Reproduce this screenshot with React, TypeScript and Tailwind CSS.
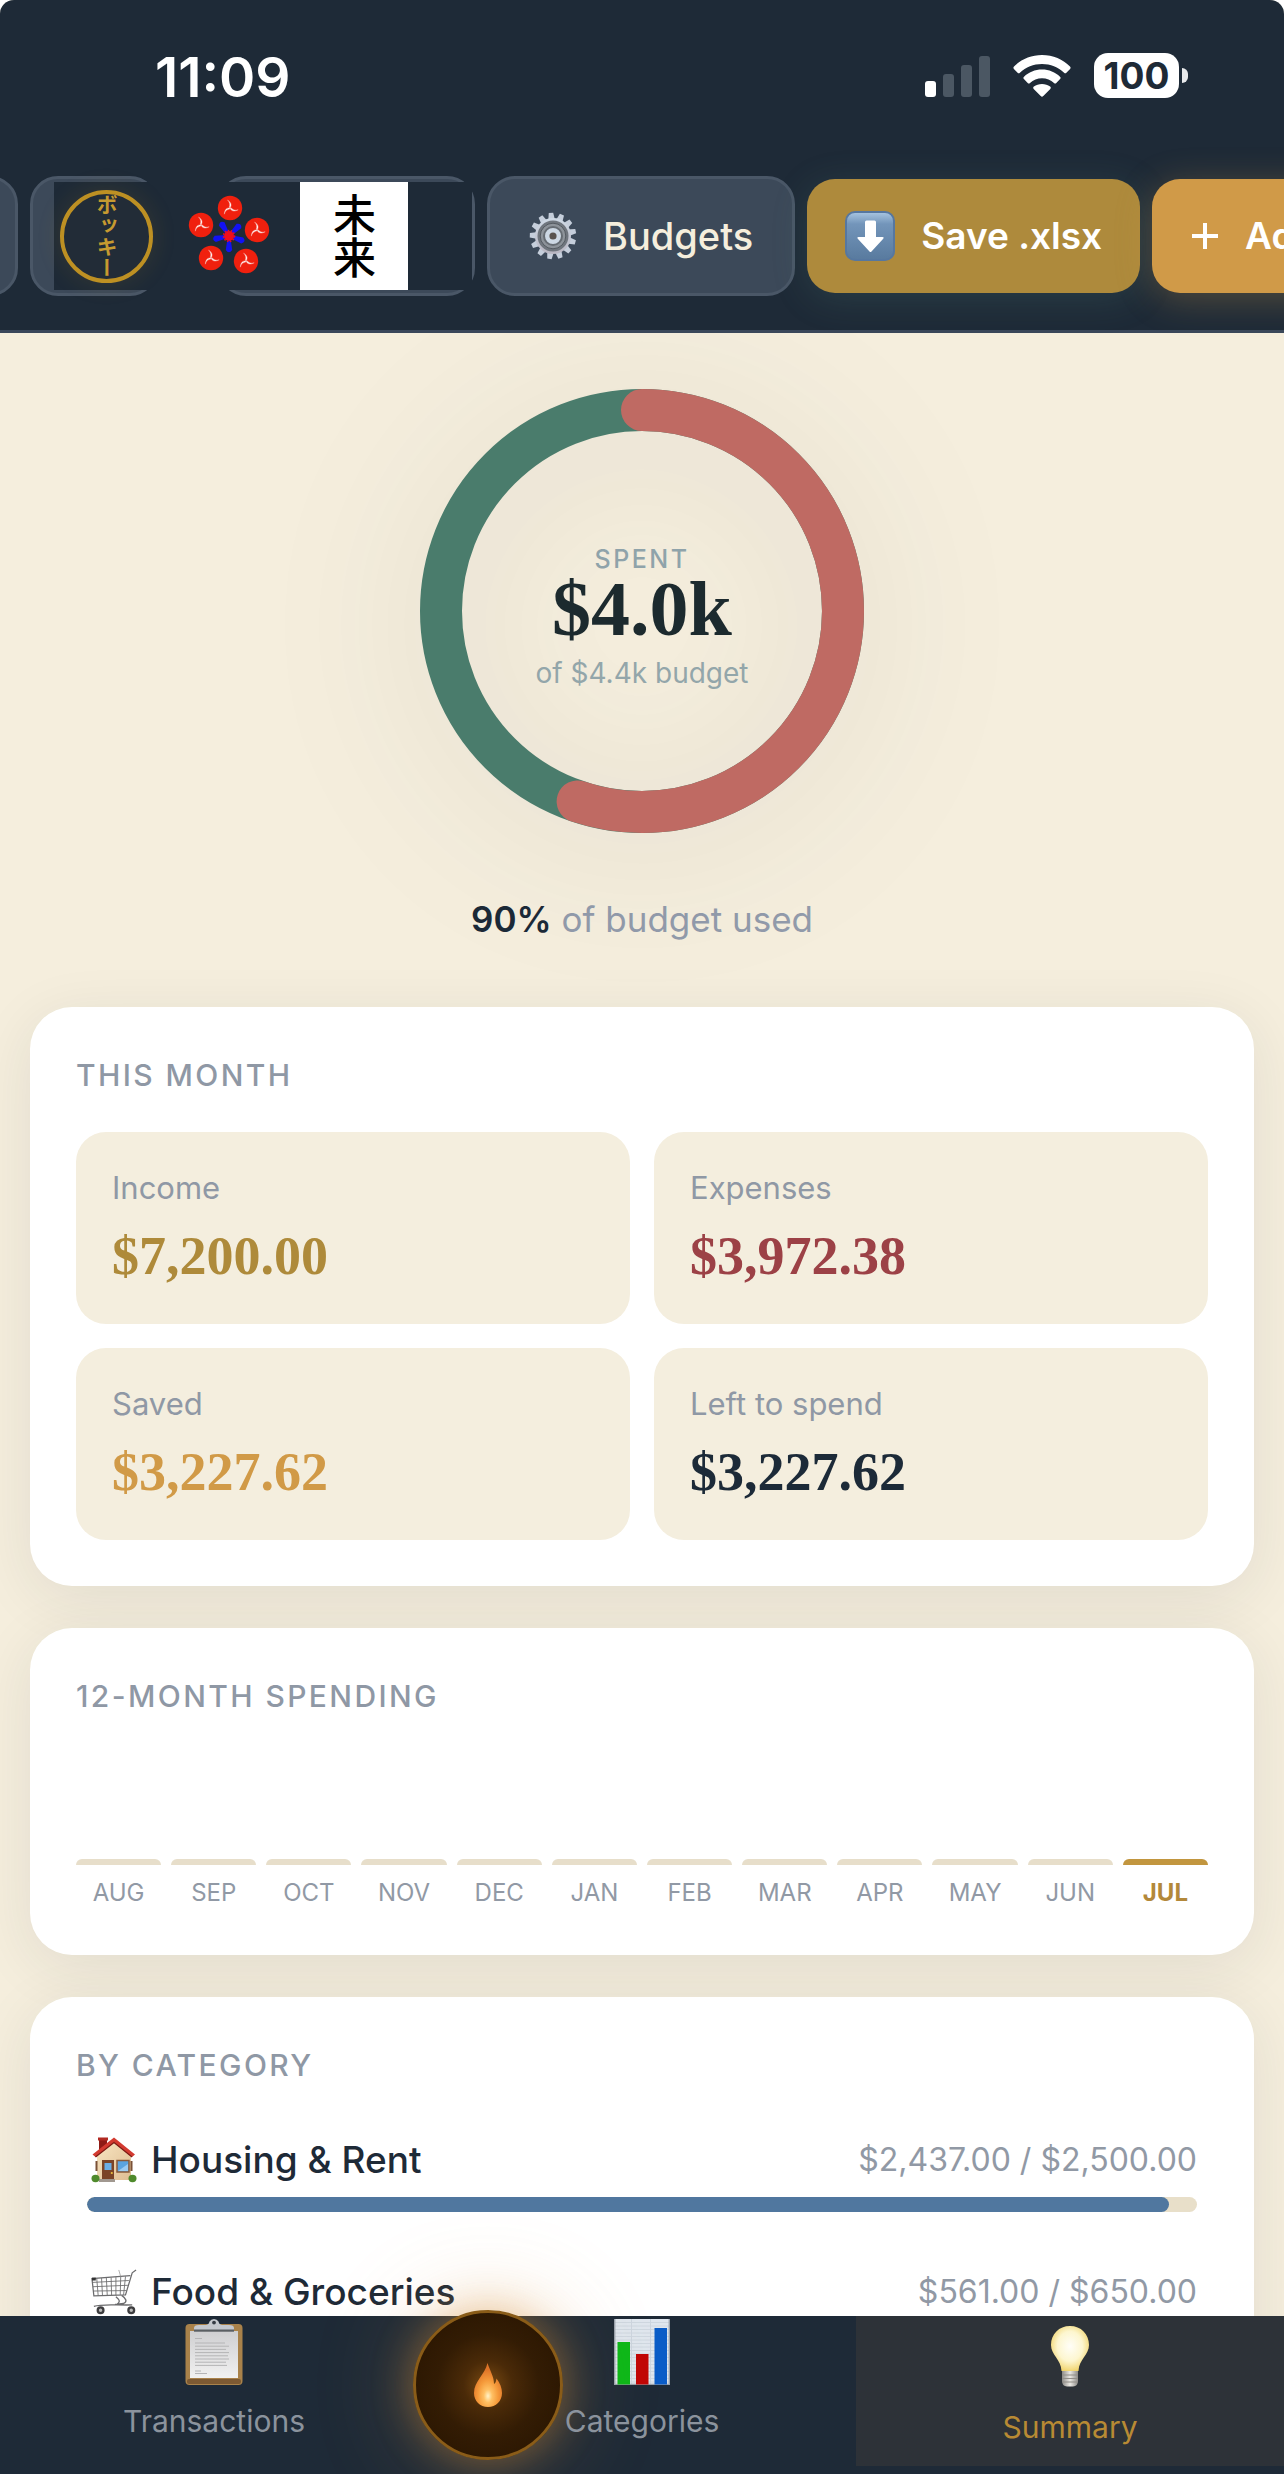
import type { ReactNode } from "react"

interface Stat {
  label: string
  value: string
  color: string
}

interface Category {
  name: string
  icon: ReactNode
  spent: number
  budget: number
  bar: string
}

const MONTHS = ["AUG", "SEP", "OCT", "NOV", "DEC", "JAN", "FEB", "MAR", "APR", "MAY", "JUN", "JUL"]
const CURRENT_MONTH = "JUL"

const STATS: Stat[] = [
  { label: "Income", value: "$7,200.00", color: "text-[#ae8a3a]" },
  { label: "Expenses", value: "$3,972.38", color: "text-[#9c4146]" },
  { label: "Saved", value: "$3,227.62", color: "text-[#d19a47]" },
  { label: "Left to spend", value: "$3,227.62", color: "text-[#1c2a38]" },
]

const money = (n: number) => "$" + n.toLocaleString("en-US", { minimumFractionDigits: 2 })

/* ---------- Status bar icons ---------- */

function SignalIcon() {
  return (
    <svg width="65" height="42" viewBox="0 0 65 42" aria-hidden="true">
      <rect x="0" y="26" width="11" height="16" rx="3" fill="#fff" />
      <rect x="18" y="19" width="11" height="23" rx="3" fill="#4b5763" />
      <rect x="36" y="10" width="11" height="32" rx="3" fill="#4b5763" />
      <rect x="54" y="1" width="11" height="41" rx="3" fill="#4b5763" />
    </svg>
  )
}

function WifiIcon() {
  return (
    <svg width="58" height="42" viewBox="0 0 58 42" fill="#fff" aria-hidden="true">
      <path d="M29 0C18 0 8 4.400 1 11.500C0.200 12.300 0.200 13.200 0.900 14L4.600 17.800C5.300 18.500 6.200 18.500 6.900 17.800C12.800 12 20.500 8.900 29 8.900S45.200 12 51.100 17.800C51.800 18.500 52.700 18.500 53.400 17.800L57.100 14C57.800 13.200 57.800 12.300 57 11.500C50 4.400 40 0 29 0Z" />
      <path d="M29 14.500C22 14.500 15.700 17.200 11 21.700C10.200 22.500 10.200 23.400 10.900 24.100L14.700 28C15.400 28.700 16.300 28.700 17 28C20.200 25 24.400 23.300 29 23.300S37.800 25 41 28C41.700 28.700 42.600 28.700 43.300 28L47.100 24.100C47.800 23.400 47.800 22.500 47 21.700C42.300 17.200 36 14.500 29 14.500Z" />
      <path d="M29 28.900C25.900 28.900 23.100 29.900 20.900 31.600C20 32.300 20 33.200 20.700 33.900L27.700 41.100C28.500 41.900 29.500 41.900 30.300 41.100L37.300 33.900C38 33.200 38 32.300 37.100 31.600C34.900 29.900 32.100 28.900 29 28.900Z" />
    </svg>
  )
}

function Battery() {
  return (
    <div className="flex items-center gap-[3px]">
      <div className="flex h-[45px] w-[85px] items-center justify-center rounded-[14px] bg-white text-[37px] font-bold leading-none text-[#1e2a36]">
        100
      </div>
      <div className="h-[15px] w-[6px] rounded-r-full bg-white/90" />
    </div>
  )
}

/* ---------- Toolbar icons ---------- */

function PlumCrest() {
  const petals = [
    [56, 26],
    [83, 48],
    [72, 79],
    [37, 76],
    [27, 43],
  ]
  return (
    <svg width="108" height="108" viewBox="0 0 108 108" aria-hidden="true">
      {[45, 109, 180, 258, 329].map((deg) => (
        <path key={deg} d="M53.500 52L51.800 40Q55 35.500 58.200 40L56.500 52Z" fill="#1212f5" transform={`rotate(${deg} 55 54)`} />
      ))}
      <circle cx="55" cy="54" r="5" fill="#f00d1c" />
      <circle cx="55" cy="54" r="5.500" fill="none" stroke="#f00d1c" strokeWidth="1.500" strokeDasharray="1.500 1.500" />
      {petals.map(([x, y]) => (
        <g key={x} transform={`translate(${x} ${y})`}>
          <circle r="12.200" fill="#f0200e" />
          {[0, 120, 240].map((deg) => (
            <path key={deg} d="M0 0C2 -2.500 1.500 -5.500 -2.500 -8C0 -5.500 0.200 -3 -0.800 -0.800Z" fill="#fff" stroke="#f9b0aa" strokeWidth="0.400" transform={`rotate(${deg})`} />
          ))}
        </g>
      ))}
    </svg>
  )
}

function GearIcon() {
  return (
    <svg width="48" height="48" viewBox="0 0 48 48" aria-hidden="true">
      <defs>
        <linearGradient id="gear" x1="0" y1="0" x2="0" y2="1">
          <stop offset="0" stopColor="#cfdae6" />
          <stop offset="1" stopColor="#b9b6c2" />
        </linearGradient>
      </defs>
      {Array.from({ length: 13 }, (_, i) => (
        <path key={i} d="M20.500 9L21.800 0.800H26.200L27.500 9Z" fill="#c5cedb" transform={`rotate(${(i * 360) / 13 - 5} 24 24)`} />
      ))}
      <circle cx="24" cy="24" r="18" fill="url(#gear)" />
      <circle cx="24" cy="24" r="15.500" fill="#70767e" />
      <circle cx="24" cy="24" r="12.800" fill="#8d939a" stroke="#555b62" strokeWidth="1" />
      <circle cx="24" cy="24" r="10" fill="#666c73" />
      <circle cx="24" cy="24" r="5.800" fill="#59534f" stroke="#cdd8e4" strokeWidth="4.400" />
    </svg>
  )
}

function DownloadIcon() {
  return (
    <svg width="50" height="50" viewBox="0 0 50 50" aria-hidden="true">
      <defs>
        <linearGradient id="dl" x1="0" y1="0" x2="0" y2="1">
          <stop offset="0" stopColor="#a9c6e2" />
          <stop offset="0.250" stopColor="#7395ba" />
          <stop offset="1" stopColor="#587a9e" />
        </linearGradient>
      </defs>
      <rect x="1" y="1" width="48" height="48" rx="9" fill="url(#dl)" stroke="#5677a0" strokeWidth="2" />
      <path d="M20 11Q20 9.500 21.500 9.500H29.500Q31 9.500 31 11V26H37.500Q39.500 26 38 28L26.500 40.500Q25.500 41.500 24.500 40.500L13 28Q11.500 26 13.500 26H20Z" fill="#fff" />
    </svg>
  )
}

/* ---------- Category icons ---------- */

function HouseIcon() {
  return (
    <svg width="46" height="46" viewBox="0 0 46 46" aria-hidden="true">
      <defs>
        <linearGradient id="wall" x1="0" y1="0" x2="1" y2="1">
          <stop offset="0" stopColor="#f8e6c2" />
          <stop offset="1" stopColor="#dfbd93" />
        </linearGradient>
      </defs>
      <rect x="8" y="1" width="8" height="14" fill="#8e1b16" />
      <rect x="7" y="0.500" width="10" height="3" fill="#b12a22" />
      <path d="M6 43V18L23 4L40 18V43Z" fill="url(#wall)" />
      <path d="M23 0.500L1.500 17.500L4.500 20L23 5.500L41 20L44 17.500Z" fill="#d33a30" />
      <path d="M4.500 20L23 5.500L41 20" fill="none" stroke="#7c1913" strokeWidth="1.200" />
      <rect x="4.500" y="24" width="2" height="10" fill="#7a5137" />
      <rect x="39.500" y="24" width="2" height="10" fill="#7a5137" />
      <rect x="11" y="23" width="12" height="20" fill="#7b4427" />
      <rect x="13.500" y="26" width="7" height="7" fill="#6aaee6" />
      <circle cx="20.800" cy="36" r="1.100" fill="#f0c340" />
      <rect x="26" y="23.500" width="12" height="11.500" fill="#5ba4e0" stroke="#8a5a38" strokeWidth="1.500" />
      <path d="M27 34L37 27V34Z" fill="#9cccf2" />
      <rect x="8" y="42" width="16" height="3" fill="#a19890" />
      <ellipse cx="4.500" cy="41.500" rx="4" ry="3.700" fill="#4f8a2c" />
      <ellipse cx="41.500" cy="41.500" rx="4" ry="3.700" fill="#4f8a2c" />
    </svg>
  )
}

function CartIcon() {
  return (
    <svg width="46" height="46" viewBox="0 0 48 48" fill="none" stroke="#6c6c6e" aria-hidden="true">
      <path d="M47 1L43 4L36 27L3 28L1 10L41 7" strokeWidth="1.300" />
      <path d="M1.500 14L39.500 12M2 18.500L38.500 17M2.500 23L37 22.500M6 10L7.500 28M11 9.500L12 28M16 9.300L17 28M21 9L21.500 27.500M26 8.500L26 27.500M31 8.200L30.500 27M36 7.800L34 27" strokeWidth="0.900" />
      <path d="M29 1L31 8" stroke="#999" strokeWidth="0.800" />
      <path d="M32 27.500C37 31 38 34 34 36L25 37M26 29C31 33 30 35 27 37M3 39C12 36 26 38 43 37.500" strokeWidth="1.400" />
      <rect x="1" y="9" width="4" height="3" fill="#333" stroke="none" />
      <circle cx="10" cy="43" r="3" fill="#bbb" stroke="#3d3d3f" strokeWidth="2.400" />
      <circle cx="42" cy="43" r="3" fill="#bbb" stroke="#3d3d3f" strokeWidth="2.400" />
    </svg>
  )
}

/* ---------- Tab bar icons ---------- */

function ClipboardIcon() {
  return (
    <svg width="66" height="66" viewBox="0 0 66 66" aria-hidden="true">
      <defs>
        <linearGradient id="paper" x1="0" y1="0" x2="0" y2="1">
          <stop offset="0" stopColor="#cfcfd1" />
          <stop offset="1" stopColor="#f1f1f1" />
        </linearGradient>
      </defs>
      <rect x="4.500" y="5" width="57" height="61" rx="4" fill="#a9824a" />
      <rect x="6" y="60" width="54" height="5" rx="2" fill="#7d5a33" />
      <rect x="9" y="12" width="48" height="47" fill="url(#paper)" />
      <path d="M14 19.500H21M14 24H44M14 27.200H48M14 30.400H45M14 33.600H48M14 36.800H47M14 40H48M14 43.200H45M14 46.400H46M14 52H20M14 54.500H26" stroke="#b4b4b6" strokeWidth="1" />
      <path d="M13 11.500V9Q13 6 18 6H25Q28 5.500 28.500 2.500Q30 0 33 0Q36 0 37.500 2.500Q38 5.500 41 6H48Q53 6 53 9V11.500Z" fill="#c3c8ce" />
      <rect x="13" y="10.500" width="40" height="2.200" fill="#5b5f63" />
      <circle cx="33" cy="3.600" r="1.900" fill="#333b44" />
    </svg>
  )
}

function ChartIcon() {
  return (
    <svg width="66" height="66" viewBox="0 0 66 66" aria-hidden="true">
      <rect x="5" y="0" width="56" height="66" fill="#dfe6ee" />
      <path d="M5 3.500H61M5 7H61M5 10.500H61M5 14H61M5 17.500H61M5 21H61M5 24.500H61M5 28H61M5 31.500H61M5 35H61M5 38.500H61M5 42H61M5 45.500H61M5 49H61M5 52.500H61M5 56H61M5 59.500H61M5 63H61" stroke="#c9d3dc" strokeWidth="0.800" />
      <path d="M22.500 0V66M41.500 0V66" stroke="#ccd5df" strokeWidth="1" />
      <path d="M5.700 0V66M60.300 0V66M5 65.500H61" stroke="#9aa2ac" strokeWidth="1.400" />
      <rect x="8.500" y="23" width="12.500" height="42.500" fill="#0cb818" />
      <rect x="27" y="35" width="12.500" height="30.500" fill="#c10606" />
      <rect x="45.500" y="9" width="12.500" height="56.500" fill="#0a5cc7" />
    </svg>
  )
}

function BulbIcon() {
  return (
    <svg width="66" height="66" viewBox="0 0 66 66" aria-hidden="true">
      <defs>
        <radialGradient id="bulb" cx="0.500" cy="0.450" r="0.600">
          <stop offset="0" stopColor="#fffef8" />
          <stop offset="0.550" stopColor="#fdf6cf" />
          <stop offset="1" stopColor="#efcf5e" />
        </radialGradient>
        <linearGradient id="socket" x1="0" y1="0" x2="1" y2="0">
          <stop offset="0" stopColor="#8e8c88" />
          <stop offset="0.500" stopColor="#ebe9e4" />
          <stop offset="1" stopColor="#8e8c88" />
        </linearGradient>
      </defs>
      <path d="M33 1C22 1 14 9 14 20C14 30 24 34 24.500 46H41.500C42 34 52 30 52 20C52 9 44 1 33 1Z" fill="url(#bulb)" />
      <path d="M25 46H41V56Q41 61 36 61.500H30Q25 61 25 56Z" fill="url(#socket)" />
      <path d="M25 50H41M25 53.500H41M25.500 57H40.500" stroke="#918e88" strokeWidth="1" />
    </svg>
  )
}

function FlameIcon() {
  return (
    <svg width="28" height="44" viewBox="0 0 28 44" aria-hidden="true">
      <defs>
        <radialGradient id="flame" cx="0.500" cy="0.750" r="0.600">
          <stop offset="0" stopColor="#fff3c8" />
          <stop offset="0.250" stopColor="#ffc063" />
          <stop offset="0.600" stopColor="#f59a3a" />
          <stop offset="1" stopColor="#df7428" />
        </radialGradient>
      </defs>
      <path d="M13.500 0C15.500 7 20 13 20 21C22 20 22 18 22.500 15.500C26 20 28 25 28 30C28 38 22 44 14 44S0 38 0 30C0 18 11 12 13.500 0Z" fill="url(#flame)" />
    </svg>
  )
}

/* ---------- Sections ---------- */

function Header() {
  return (
    <header className="shrink-0 border-b-[3px] border-[#3a475a] bg-[#1e2a37]">
      <div className="flex h-[176px] items-start justify-between pr-[96px] pl-[155px]">
        <time className="mt-[50px] text-[55px] font-semibold leading-[54px] text-white">11:09</time>
        <div className="mt-[53px] flex items-center gap-[23px]">
          <SignalIcon />
          <WifiIcon />
          <Battery />
        </div>
      </div>

      <div className="flex h-[120px] items-center gap-3 overflow-x-clip whitespace-nowrap text-[37px]">
        <button aria-label="Previous" className="-ml-[100px] h-[120px] w-[118px] shrink-0 rounded-[28px] border-[3px] border-[#4a5767] bg-[#3c4959]" />
        <div className="flex shrink-0 gap-[60px]">
          <button className="flex h-[120px] w-[128px] items-center rounded-[28px] border-[3px] border-[#4a5767] bg-[#3c4959] pl-[21px]">
            <span className="flex h-[108px] w-[120px] shrink-0 items-center bg-[#1e2a37] pl-[6px]">
              <span className="flex size-[93px] items-center justify-center rounded-full border-[4px] border-[#bd9023] bg-[#222c37] shadow-[0_0_24px_rgba(189,144,35,0.15)]">
                <span className="font-['Noto_Sans_CJK_JP',sans-serif] text-[21px] font-bold leading-none text-[#c69a30] [writing-mode:vertical-rl]">
                  ボッキー
                </span>
              </span>
            </span>
          </button>
          <button className="flex h-[120px] w-[257px] items-center rounded-[28px] border-[3px] border-[#4a5767] bg-[#3c4959]">
            <span className="-ml-[47px] flex h-[108px] w-[298px] shrink-0 items-center bg-[#1e2a37]">
              <PlumCrest />
              <span className="ml-[18px] flex size-[108px] shrink-0 items-center justify-center bg-white font-['Noto_Sans_CJK_JP',sans-serif] text-[43px] font-medium leading-none text-black [writing-mode:vertical-rl]">
                未来
              </span>
            </span>
          </button>
        </div>
        <button className="flex h-[120px] shrink-0 items-center gap-[26px] rounded-[28px] border-[3px] border-[#4a5767] bg-[#3c4959] px-[39px] text-[38px] font-medium text-[#f5eedd]">
          <GearIcon />
          Budgets
        </button>
        <button className="flex h-[114px] shrink-0 items-center gap-[26px] rounded-[28px] bg-[#ae8a3c] px-[38px] font-semibold text-white shadow-[0_6px_36px_rgba(90,140,130,0.2)]">
          <DownloadIcon />
          Save .xlsx
        </button>
        <button className="flex h-[114px] shrink-0 items-center gap-[26px] rounded-[28px] bg-[#d09a48] px-[39px] font-semibold text-white shadow-[0_6px_36px_rgba(208,154,72,0.3)]">
          <svg width="28" height="28" viewBox="0 0 28 28" stroke="#fff" strokeWidth="4" aria-hidden="true">
            <path d="M14 1V27M1 14H27" />
          </svg>
          Add
        </button>
      </div>
      <div className="h-[34px]" />
    </header>
  )
}

function SpendingRing({ spent, income }: { spent: number; income: number }) {
  const radius = 201
  const length = 2 * Math.PI * radius
  const filled = (spent / income) * length

  return (
    <section className="flex flex-col items-center pt-[56px]">
      <div className="relative size-[444px]">
        <svg viewBox="0 0 444 444" className="size-full overflow-visible drop-shadow-[0_14px_72px_rgba(30,42,56,0.13)]" aria-hidden="true">
          <circle cx="222" cy="222" r={radius} fill="none" stroke="#4a7c6c" strokeWidth="42" />
          <circle
            cx="222"
            cy="222"
            r={radius}
            fill="none"
            stroke="#bf6a63"
            strokeWidth="42"
            strokeLinecap="round"
            strokeDasharray={`${filled} ${length}`}
            transform="rotate(-90 222 222)"
          />
        </svg>
        <div className="absolute inset-0 flex flex-col items-center justify-center pt-4">
          <span className="text-[25px] font-medium leading-[30px] tracking-widest text-[#8fa3aa]">SPENT</span>
          <span className="font-['Liberation_Serif',serif] text-[78px] font-bold leading-[70px] text-[#1c2a2e]">$4.0k</span>
          <span className="mt-2 text-[28px] leading-[42px] text-[#93a6aa]">of $4.4k budget</span>
        </div>
      </div>
      <p className="mt-[59px] text-[35px] leading-[54px] text-[#929bab]">
        <strong className="font-semibold text-[#1c2a38]">90%</strong> of budget used
      </p>
    </section>
  )
}

function Card({ title, children }: { title: string; children: ReactNode }) {
  return (
    <section className="rounded-[42px] bg-white p-[46px] shadow-[0_12px_60px_rgba(30,42,56,0.09)]">
      <h2 className="mb-[35px] text-[30px] font-medium leading-[44px] tracking-[0.08em] text-[#8f98a5]">{title}</h2>
      {children}
    </section>
  )
}

function CategoryRow({ name, icon, spent, budget, bar }: Category) {
  return (
    <li className="p-[11px]">
      <div className="flex h-[54px] items-center justify-between">
        <span className="flex items-center gap-[14px] pl-[4px] text-[37px] font-medium leading-[54px] text-[#1e2a37]">
          {icon}
          {name}
        </span>
        <span className="text-[32px] leading-[54px] text-[#9199a5]">
          {money(spent)} / {money(budget)}
        </span>
      </div>
      <div className="mt-[10px] h-[15px] overflow-hidden rounded-full bg-[#e8dfc9]">
        <div className={`h-full rounded-full ${bar}`} style={{ width: `${(spent / budget) * 100}%` }} />
      </div>
    </li>
  )
}

function TabBar() {
  return (
    <nav className="relative z-10 shrink-0 bg-[#1e2a37] pb-2 text-[30px] leading-[45px] text-[#8b939d]">
      <div className="grid h-[150px] grid-cols-3">
        <a href="#transactions" className="flex flex-col items-center gap-[14px] pt-[3px]">
          <ClipboardIcon />
          Transactions
        </a>
        <a href="#categories" className="flex flex-col items-center gap-[14px] pt-[3px]">
          <ChartIcon />
          <span className="relative z-10">Categories</span>
        </a>
        <a href="#summary" className="flex flex-col items-center gap-[14px] bg-[#2d3238] pt-[9px] text-[#b88a34]">
          <BulbIcon />
          Summary
        </a>
      </div>
      <button
        aria-label="Streak"
        className="absolute -top-[6px] left-[38%] flex size-[150px] -translate-x-1/2 items-center justify-center rounded-full border-[3px] border-[#8a5c18] bg-[radial-gradient(circle,#7a4a12_0%,#4a2a08_24%,#331c04_50%,#261300_100%)] shadow-[0_0_42px_rgba(215,140,50,0.45),0_0_100px_rgba(215,150,70,0.3)]"
      >
        <FlameIcon />
      </button>
    </nav>
  )
}

export default function App() {
  const categories: Category[] = [
    { name: "Housing & Rent", icon: <HouseIcon />, spent: 2437, budget: 2500, bar: "bg-[#50779f]" },
    { name: "Food & Groceries", icon: <CartIcon />, spent: 561, budget: 650, bar: "bg-[#4a7c6c]" },
  ]

  return (
    <div className="bg-white">
      <div className="flex h-screen flex-col overflow-hidden rounded-t-[14px] bg-[#f5eedd] font-[Inter,sans-serif]">
        <Header />
        <main className="min-h-0 flex-1 overflow-y-auto px-[30px] [scrollbar-width:none]">
          <SpendingRing spent={3972.38} income={7200} />

          <div className="mt-[61px] flex flex-col gap-[42px] pb-[42px]">
            <Card title="THIS MONTH">
              <div className="grid grid-cols-2 gap-6">
                {STATS.map((stat) => (
                  <div key={stat.label} className="rounded-[30px] bg-[#f4eede] p-[36px]">
                    <div className="text-[31px] leading-[40px] text-[#8f98a5]">{stat.label}</div>
                    <div className={`mt-4 font-['Liberation_Serif',serif] text-[54px] font-bold leading-[64px] ${stat.color}`}>
                      {stat.value}
                    </div>
                  </div>
                ))}
              </div>
            </Card>

            <Card title="12-MONTH SPENDING">
              <div className="grid grid-cols-12 gap-[10px]">
                {MONTHS.map((month) => {
                  const active = month === CURRENT_MONTH
                  return (
                    <div key={month} className="text-center">
                      <div className="flex h-[112px] items-end">
                        <div className={`h-[6px] w-full rounded-t-[6px] ${active ? "bg-[#c2963f]" : "bg-[#e7deca]"}`} />
                      </div>
                      <div className={`mt-[11px] text-[24px] leading-[33px] ${active ? "font-bold text-[#b3883a]" : "text-[#9199a5]"}`}>
                        {month}
                      </div>
                    </div>
                  )
                })}
              </div>
            </Card>

            <Card title="BY CATEGORY">
              <ul className="flex flex-col gap-[31px]">
                {categories.map((category) => (
                  <CategoryRow key={category.name} {...category} />
                ))}
              </ul>
            </Card>
          </div>
        </main>
        <TabBar />
      </div>
    </div>
  )
}
